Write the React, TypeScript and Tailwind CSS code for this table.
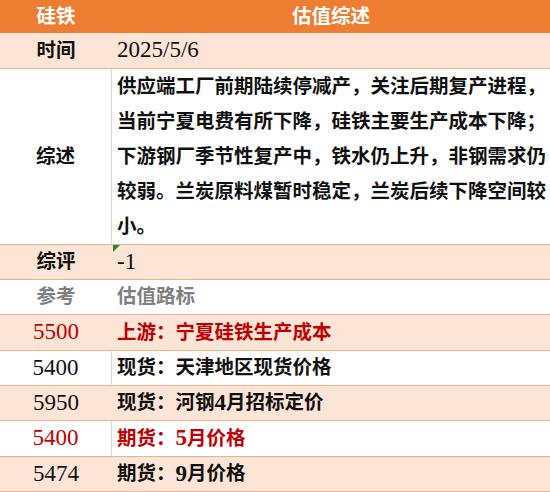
import React from "react";

const font = { fontFamily: '"Liberation Serif", "Noto Sans CJK SC", serif' };

type RowProps = {
  left: React.ReactNode;
  right: React.ReactNode;
  peach?: boolean;
  divider?: boolean;
  h?: string;
  leftClass?: string;
  rightClass?: string;
};

function Row({ left, right, peach, divider, h = "h-[35px]", leftClass = "", rightClass = "" }: RowProps) {
  return (
    <div className={`flex ${h} border-b border-[#F4B183] ${peach ? "bg-[#FCE4D6]" : "bg-white"}`}>
      <div className={`w-[112px] shrink-0 flex items-center justify-center ${divider ? "border-r border-[#D9D9D9]" : ""} ${leftClass}`}>
        {left}
      </div>
      <div className={`flex-1 flex items-center pl-[5px] whitespace-nowrap ${rightClass}`}>{right}</div>
    </div>
  );
}

const N = ({ children }: { children: React.ReactNode }) => <span className="text-[23px]">{children}</span>;

export default function App() {
  const lines = [
    "供应端工厂前期陆续停减产，关注后期复产进程，",
    "当前宁夏电费有所下降，硅铁主要生产成本下降；",
    "下游钢厂季节性复产中，铁水仍上升，非钢需求仍",
    "较弱。兰炭原料煤暂时稳定，兰炭后续下降空间较",
    "小。",
  ];
  return (
    <div className="w-[550px] h-[492px] overflow-hidden bg-white text-[19.5px] text-[#111]" style={font}>
      <div className="flex h-[33px] bg-[#ED7D31] text-white font-bold">
        <div className="w-[112px] shrink-0 flex items-center justify-center">硅铁</div>
        <div className="flex-1 flex items-center justify-center">估值综述</div>
      </div>
      <Row peach h="h-[36px]" left="时间" leftClass="font-bold" right={<N>2025/5/6</N>} />
      <div className="flex h-[176px] border-b border-[#F4B183] bg-white">
        <div className="w-[112px] shrink-0 flex items-center justify-center font-bold border-r border-[#D9D9D9]">综述</div>
        <div className="flex-1 pl-[5px] leading-[35px] font-bold whitespace-nowrap">
          {lines.map((l, i) => (
            <div key={i}>{l}</div>
          ))}
        </div>
      </div>
      <div className="relative">
        <Row peach left="综评" leftClass="font-bold" right={<N>-1</N>} />
        <div className="absolute left-[113px] top-0 w-0 h-0 border-t-[7px] border-r-[7px] border-t-[#1E8C2A] border-r-transparent" />
      </div>
      <Row left="参考" right="估值路标" leftClass="text-[#7F7F7F] font-bold" rightClass="text-[#7F7F7F] font-bold" />
      <Row
        peach
        h="h-[36px]"
        left={<N>5500</N>}
        right="上游：宁夏硅铁生产成本"
        leftClass="text-[#C00000]"
        rightClass="text-[#C00000] font-bold"
      />
      <Row divider left={<N>5400</N>} right="现货：天津地区现货价格" rightClass="font-bold" />
      <Row peach left={<N>5950</N>} right={<>现货：河钢<N>4</N>月招标定价</>} rightClass="font-bold" />
      <Row
        divider
        h="h-[36px]"
        left={<N>5400</N>}
        right={<><span>期货：</span><N>5</N>月价格</>}
        leftClass="text-[#C00000]"
        rightClass="text-[#C00000] font-bold"
      />
      <Row peach left={<N>5474</N>} right={<><span>期货：</span><N>9</N>月价格</>} rightClass="font-bold" />
    </div>
  );
}
